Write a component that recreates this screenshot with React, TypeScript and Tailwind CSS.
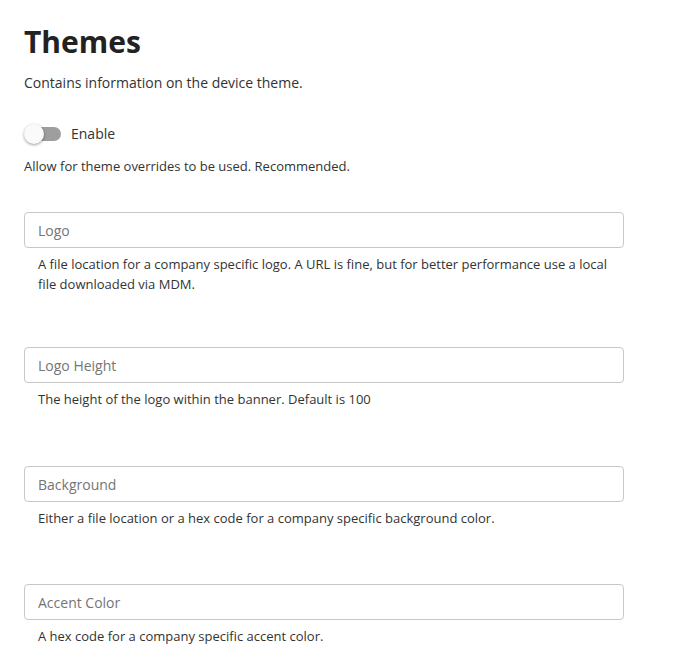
import React from "react";

const fields = [
  { label: "Logo", help: "A file location for a company specific logo. A URL is fine, but for better performance use a local file downloaded via MDM.", mb: "mb-[53px]" },
  { label: "Logo Height", help: "The height of the logo within the banner. Default is 100", mb: "mb-[57px]" },
  { label: "Background", help: "Either a file location or a hex code for a company specific background color.", mb: "mb-[56px]" },
  { label: "Accent Color", help: "A hex code for a company specific accent color.", mb: "mb-0" },
];

export default function App() {
  return (
    <div className="min-h-[661px] bg-white pl-6 pt-6 text-[#333333]" style={{ fontFamily: '"Open Sans", sans-serif' }}>
      <div className="w-[600px]">
        <h1 className="text-[30px] font-bold leading-[36px] text-[#222222]">Themes</h1>
        <p className="mt-[13px] text-[14px] leading-[20px]">Contains information on the device theme.</p>
        <div className="mt-[31px] flex h-5 items-center">
          <div className="relative ml-[1px] h-5 w-[36px]">
            <div className="absolute left-[2px] top-[3px] h-[14px] w-[34px] rounded-full bg-[#9e9e9e]" />
            <div className="absolute left-[-1px] top-0 h-5 w-5 rounded-full bg-[#fafafa] shadow-[0_1px_3px_rgba(0,0,0,0.4)]" />
          </div>
          <span className="ml-[10px] text-[14px] leading-[20px]">Enable</span>
        </div>
        <p className="mt-[12px] text-[13px] leading-[20px]">Allow for theme overrides to be used. Recommended.</p>
        <div className="mt-[36px]">
          {fields.map((f) => (
            <div key={f.label} className={f.mb}>
              <input
                placeholder={f.label}
                className="box-border block h-[36px] w-full rounded-[4px] border border-[#c8c8c8] bg-white px-[13px] text-[14px] text-[#333333] outline-none placeholder:text-[#757575]"
              />
              <p className="mt-[6px] px-[14px] text-[13px] leading-[20px]">{f.help}</p>
            </div>
          ))}
        </div>
      </div>
    </div>
  );
}
